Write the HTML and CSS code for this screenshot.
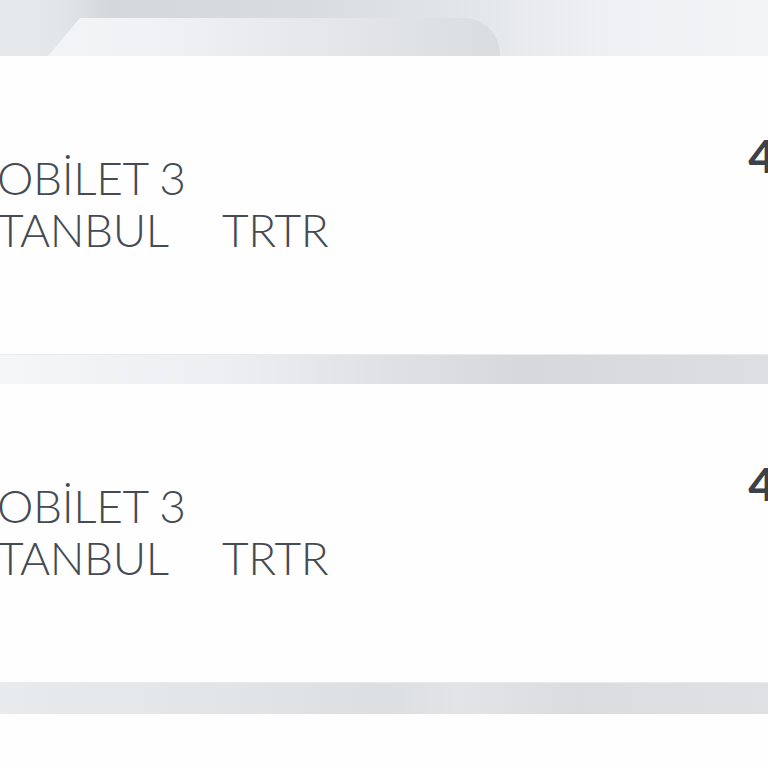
FILE: index.html
```html
<!DOCTYPE html>
<html lang="tr">
<head>
    <meta charset="UTF-8">
    <meta name="viewport" content="width=device-width, initial-scale=1.0">
    <title>Bilet listesi</title>
    <link rel="stylesheet" href="styles.css">
</head>
<body>
    <div class="screen">
        <!-- Üst şerit -->
        <div class="top-band">
            <div class="tab-shape"></div>
        </div>

        <div class="ticket">
            <div class="ticket-info">
                <div class="line">OBİLET 3</div>
                <div class="line">
                    <span class="city">TANBUL</span>
                    <span class="code">TRTR</span>
                </div>
            </div>
            <div class="price">4</div>
        </div>

        <div class="divider"></div>

        <div class="ticket">
            <div class="ticket-info">
                <div class="line">OBİLET 3</div>
                <div class="line">
                    <span class="city">TANBUL</span>
                    <span class="code">TRTR</span>
                </div>
            </div>
            <div class="price">4</div>
        </div>

        <div class="divider divider-alt"></div>
    </div>
</body>
</html>
```

FILE: styles.css
```css
* {
    margin: 0;
    padding: 0;
    box-sizing: border-box;
}

body {
    font-family: 'Lato', 'Noto Sans', sans-serif;
    background-color: #fefefe;
    color: #454b52;
    overflow: hidden;
}

.screen {
    width: 768px;
    height: 768px;
    overflow: hidden;
}

/* Верхняя полоса */
.top-band {
    height: 56px;
    display: flex;
    align-items: flex-end;
    background: linear-gradient(90deg, #e6e9ec 0%, #e3e6e9 8%, #d5d8db 14%, #d9dcdf 40%, #e3e6e9 60%, #eff1f4 80%, #f3f4f6 100%);
}

.tab-shape {
    width: 500px;
    height: 38px;
    border-top-right-radius: 36px;
    clip-path: polygon(80px 0, 100% 0, 100% 100%, 48px 100%);
    background: linear-gradient(90deg, #f4f5f7 0%, #f1f2f5 30%, #e6e8eb 60%, #dadde0 100%);
}

/* Карточка билета */
.ticket {
    height: 298px;
    background: #fefefe;
    display: flex;
    justify-content: space-between;
    align-items: flex-start;
    padding-top: 96px;
    overflow: hidden;
}

.ticket-info {
    margin-left: -3px;
    font-size: 46px;
    font-weight: 300;
    line-height: 52px;
    letter-spacing: -0.4px;
}

.line {
    display: flex;
}

.city {
    width: 225px;
}

.price {
    font-size: 46px;
    font-weight: 700;
    color: #3a4148;
    line-height: 52px;
    margin-top: -22px;
    margin-right: -7px;
}

.divider {
    height: 30px;
    background: linear-gradient(90deg, #f5f6f8 0%, #eceef1 30%, #dfe1e4 50%, #d6d8db 68%, #dcdee1 100%);
    border-top: 1px solid #e9eaec;
}

.divider-alt {
    height: 32px;
    background: linear-gradient(90deg, #e8ebee 0%, #e2e5e8 30%, #dcdfe2 50%, #e2e4e7 60%, #dadcdf 75%, #dfe1e4 100%);
}
```
